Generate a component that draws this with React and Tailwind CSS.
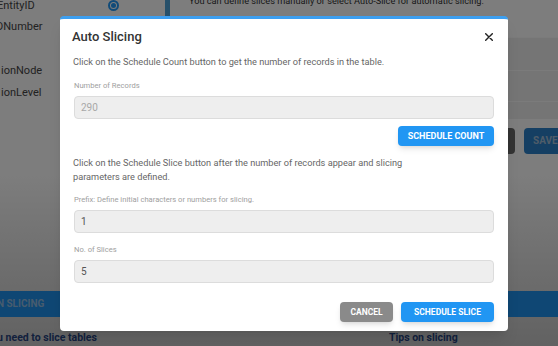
import React from 'react';

const Field = ({ label, value, muted }) => (
    <div className="flex flex-col">
        <label className="text-[7.6px] leading-[10px] text-[#a0a0a0] mb-[5px]">{label}</label>
        <input
            readOnly
            value={value}
            className={`h-[23px] w-full rounded-[4px] border border-[#dcdcdc] bg-[#eeeeee] px-[6px] text-[10px] outline-none ${
                muted ? 'text-[#a8a8a8]' : 'text-[#555]'
            }`}
        />
    </div>
);

const App = () => {
    return (
        <div
            className="relative w-[558px] h-[346px] overflow-hidden bg-white"
            style={{ fontFamily: 'Roboto, "Liberation Sans", sans-serif' }}
        >
            {/* page behind the dialog */}
            <div className="flex flex-col h-full bg-gradient-to-b from-[#fbfbfb] via-[#fbfbfb] to-[#c4c4c4]">
                <div className="flex h-[296px]">
                    <div className="w-[165px] flex flex-col text-[11px] text-[#444]">
                        <div className="flex items-center justify-between h-[20px] -mt-[4px] pr-[46px] -ml-[3px]">
                            <span>EntityID</span>
                            <span className="w-[11px] h-[11px] rounded-full border-2 border-[#2196f3] flex items-center justify-center -mt-[2px]">
                                <span className="w-[5px] h-[5px] rounded-full bg-[#2196f3]" />
                            </span>
                        </div>
                        <div className="h-[22px] flex items-center -ml-[4px]">DNumber</div>
                        <div className="h-[22px]" />
                        <div className="h-[22px] flex items-center ml-[1px]">ionNode</div>
                        <div className="h-[22px] flex items-center ml-[1px]">ionLevel</div>
                    </div>
                    <div className="w-[5px] bg-[#4fa0d4] h-[20px]" />
                    <div className="flex-1 flex flex-col">
                        <p className="text-[9.2px] text-[#333] -mt-[6px] pl-[19px]">
                            You can define slices manually or select Auto-Slice for automatic slicing.
                        </p>
                        <div className="mt-[29px] ml-auto w-[120px] border-t border-[#f6f6f6] h-[33px] bg-[#ebebeb]" />
                        <div className="ml-auto w-[120px] border-t border-[#f6f6f6] h-[31px] bg-[#ebebeb]" />
                        <div className="ml-auto w-[120px] border-t border-[#f6f6f6] h-[18px] bg-[#ebebeb]" />
                        <div className="flex justify-end gap-[9px] mt-[9px]">
                            <button className="w-[30px] h-[26px] rounded-[4px] bg-[#666]" />
                            <button className="w-[34px] h-[26px] rounded-l-[4px] bg-[#2a7fc6] text-[10px] font-bold text-[#9fb9d2] text-left pl-[9px]">
                                SAVE
                            </button>
                        </div>
                    </div>
                </div>
                <div className="flex justify-between h-[27px] bg-[#1f8ee8]">
                    <div className="text-[10px] font-bold text-[#8fb8dd] flex items-center -ml-[10px]">ON SLICING</div>
                </div>
                <div className="flex text-[10.5px] font-bold text-[#24407a] mt-[13px]">
                    <span className="-ml-[15px] w-[404px] shrink-0">You need to slice tables</span>
                    <span>Tips on slicing</span>
                </div>
            </div>

            {/* overlay */}
            <div className="absolute inset-0 bg-black/50" />

            {/* dialog */}
            <div className="absolute left-[60px] top-[16px] w-[448px] h-[315px] bg-white rounded-[4px] border-t-[3px] border-[#3d9ff0] shadow-lg flex flex-col px-[14px]">
                <div className="flex items-center justify-between h-[20px] mt-[8px] -ml-[2px]">
                    <h2 className="text-[13px] leading-[20px] font-medium text-[#333]">Auto Slicing</h2>
                    <svg width="8" height="8" viewBox="0 0 8 8" className="mr-[1px]">
                        <path d="M0.7 0.7L7.3 7.3M7.3 0.7L0.7 7.3" stroke="#222" strokeWidth="1.4" strokeLinecap="round" />
                    </svg>
                </div>
                <p className="text-[9.2px] leading-[14px] text-[#666] mt-[8px] -ml-[1px]">
                    Click on the Schedule Count button to get the number of records in the table.
                </p>
                <div className="mt-[12px]">
                    <Field label="Number of Records" value="290" muted />
                </div>
                <div className="flex justify-end mt-[7px]">
                    <button className="h-[20px] w-[96px] rounded-[4px] bg-[#2196f3] text-white text-[9px] leading-[20px] font-bold shadow-md">
                        SCHEDULE COUNT
                    </button>
                </div>
                <p className="text-[9.2px] leading-[14px] text-[#666] mt-[10px] -ml-[1px]">
                    Click on the Schedule Slice button after the number of records appear and slicing
                    <br />
                    parameters are defined.
                </p>
                <div className="mt-[11px]">
                    <Field label="Prefix: Define initial characters or numbers for slicing." value="1" />
                </div>
                <div className="mt-[12px]">
                    <Field label="No. of Slices" value="5" />
                </div>
                <div className="flex justify-end gap-[8px] mt-[19px]">
                    <button className="h-[20px] w-[53px] rounded-[4px] bg-[#8a8a8a] text-white text-[8.5px] leading-[20px] font-bold shadow-md">
                        CANCEL
                    </button>
                    <button className="h-[20px] w-[93px] rounded-[4px] bg-[#2196f3] text-white text-[8.5px] leading-[20px] font-bold shadow-md">
                        SCHEDULE SLICE
                    </button>
                </div>
            </div>
        </div>
    );
};

export default App;
